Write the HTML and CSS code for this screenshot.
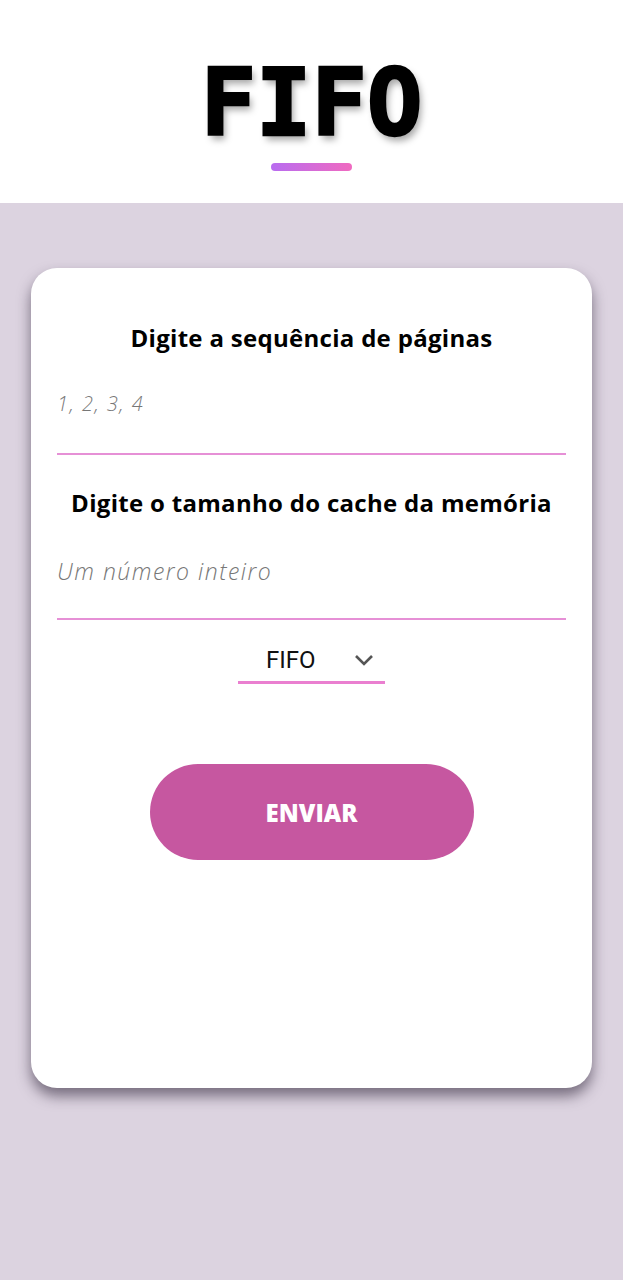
FILE: index.html
```html
<!DOCTYPE html>
<html lang="pt">
<head>
<meta charset="utf-8">
<title>FIFO</title>
<link rel="stylesheet" href="styles.css">
</head>
<body>
<header class="top">
  <h1 class="title">FIFO</h1>
  <div class="title-bar"></div>
</header>
<main class="stage">
  <form class="card">
    <label class="label">Digite a sequência de páginas</label>
    <div class="field"><span class="ph ph-small">1, 2, 3, 4</span></div>
    <label class="label label-2">Digite o tamanho do cache da memória</label>
    <div class="field"><span class="ph">Um número inteiro</span></div>
    <div class="select">
      <span class="select-text">FIFO</span>
      <svg class="chev" width="20" height="12" viewBox="0 0 20 12"><path d="M2 2 L10 10 L18 2" fill="none" stroke="#555" stroke-width="2.6"/></svg>
    </div>
    <button type="button" class="btn">ENVIAR</button>
  </form>
</main>
</body>
</html>
```
FILE: styles.css
```css
* { box-sizing: border-box; }
html, body { margin: 0; padding: 0; }
body {
  width: 623px;
  height: 1280px;
  background: #dcd3e0;
  font-family: "Open Sans", "Noto Sans", sans-serif;
  overflow: hidden;
}
.top {
  background: #fff;
  height: 203px;
  display: flex;
  flex-direction: column;
  align-items: center;
  padding-top: 54px;
}
.title {
  margin: 0;
  font-family: "DejaVu Sans Mono", monospace;
  font-weight: 700;
  font-size: 92px;
  line-height: 100px;
  color: #000;
  -webkit-text-stroke: 2.5px #000;
  text-shadow: 3px 5px 7px rgba(0,0,0,0.35);
}
.title-bar {
  margin-top: 9px;
  width: 81px;
  height: 8px;
  border-radius: 4px;
  background: linear-gradient(90deg, #b86cf0, #f06ac0);
}
.stage {
  padding: 65px 31px 0;
}
.card {
  background: #fff;
  border-radius: 26px;
  height: 820px;
  box-shadow: 0 8px 14px rgba(50,40,60,0.6);
  padding: 55px 26px 0;
  display: flex;
  flex-direction: column;
}
.label {
  text-align: center;
  font-weight: 700;
  font-size: 24px;
  line-height: 30px;
  letter-spacing: 0.3px;
  color: #000;
}
.label-2 { margin-top: 33px; }
.field {
  border-bottom: 2px solid #e690d6;
  height: 102px;
  padding-top: 37px;
}
.ph {
  font-style: italic;
  font-weight: 300;
  font-size: 23px;
  letter-spacing: 1.5px;
  color: #777;
}
.ph-small { font-size: 20px; }
.select {
  align-self: center;
  margin-top: 22px;
  width: 147px;
  height: 42px;
  border-bottom: 3px solid #ea7fd0;
  display: flex;
  align-items: center;
  padding-left: 28px;
  padding-bottom: 4px;
}
.select-text {
  font-family: Roboto, sans-serif;
  font-size: 24px;
  color: #111;
}
.chev { margin-left: 38px; }
.btn {
  align-self: center;
  margin-top: 80px;
  width: 324px;
  height: 96px;
  border: 0;
  border-radius: 48px;
  background: #c657a0;
  color: #fff;
  font-family: "Open Sans", sans-serif;
  font-weight: 800;
  font-size: 24px;
}
```
